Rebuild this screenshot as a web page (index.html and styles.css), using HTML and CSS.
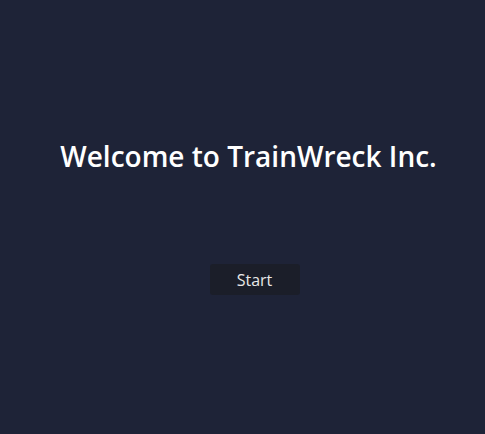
FILE: index.html
```html
<!DOCTYPE html>
<html lang="en">
<head>
    <meta charset="UTF-8">
    <title>TrainWreck Inc.</title>
    <link rel="stylesheet" href="styles.css">
</head>
<body>
    <main class="intro">
        <h1 class="intro-title">Welcome to TrainWreck Inc.</h1>
        <button class="start-btn">Start</button>
    </main>
</body>
</html>
```

FILE: styles.css
```css
html, body {
    height: 100%;
}
body {
    margin: 0;
    background-color: #1e2337;
    font-family: "Open Sans", sans-serif;
    color: #f2f2f2;
}
.intro {
    display: flex;
    flex-direction: column;
    align-items: center;
    padding-top: 137px;
    padding-left: 12px;
}
.intro-title {
    margin: 0;
    font-size: 28px;
    font-weight: 600;
    line-height: 38px;
    color: #ffffff;
}
.start-btn {
    margin-top: 89px;
    margin-left: 12px;
    width: 90px;
    height: 31px;
    border: none;
    border-radius: 3px;
    background-color: #1b1e29;
    color: #e8e8e8;
    font-family: "Open Sans", sans-serif;
    font-size: 16px;
    cursor: pointer;
}
```
